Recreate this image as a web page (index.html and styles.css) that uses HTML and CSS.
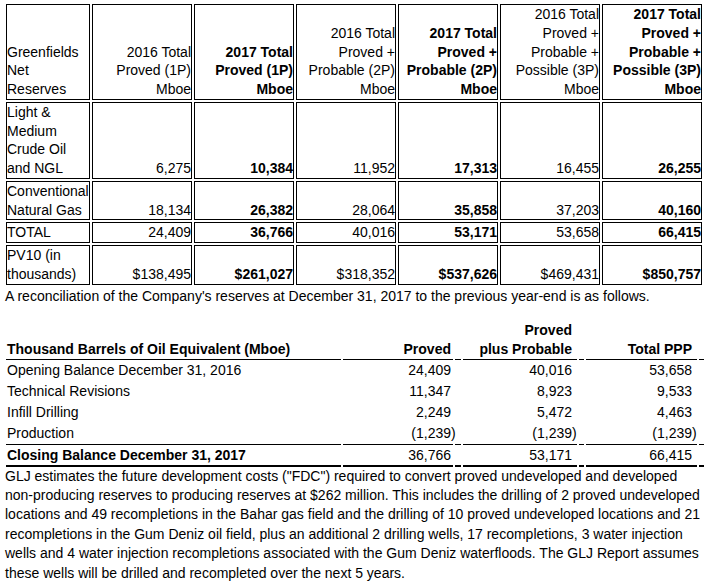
FILE: index.html
```html
<!DOCTYPE html>
<html>
<head>
<meta charset="utf-8">
<link rel="stylesheet" href="styles.css">
</head>
<body>
<table class="reserves">
  <tr>
    <td class="lbl w-lbl">Greenfields<br>Net<br>Reserves</td>
    <td class="w-num">2016 Total Proved (1P) Mboe</td>
    <td class="w-num b">2017 Total Proved (1P) Mboe</td>
    <td class="w-num">2016 Total Proved + Probable (2P) Mboe</td>
    <td class="w-num b">2017 Total Proved + Probable (2P) Mboe</td>
    <td class="w-num">2016 Total Proved + Probable + Possible (3P) Mboe</td>
    <td class="w-num b">2017 Total Proved + Probable + Possible (3P) Mboe</td>
  </tr>
  <tr>
    <td class="lbl">Light &amp;<br>Medium<br>Crude Oil<br>and NGL</td>
    <td>6,275</td>
    <td class="b">10,384</td>
    <td>11,952</td>
    <td class="b">17,313</td>
    <td>16,455</td>
    <td class="b">26,255</td>
  </tr>
  <tr>
    <td class="lbl">Conventional<br>Natural Gas</td>
    <td>18,134</td>
    <td class="b">26,382</td>
    <td>28,064</td>
    <td class="b">35,858</td>
    <td>37,203</td>
    <td class="b">40,160</td>
  </tr>
  <tr>
    <td class="lbl">TOTAL</td>
    <td>24,409</td>
    <td class="b">36,766</td>
    <td>40,016</td>
    <td class="b">53,171</td>
    <td>53,658</td>
    <td class="b">66,415</td>
  </tr>
  <tr>
    <td class="lbl">PV10 (in<br>thousands)</td>
    <td>$138,495</td>
    <td class="b">$261,027</td>
    <td>$318,352</td>
    <td class="b">$537,626</td>
    <td>$469,431</td>
    <td class="b">$850,757</td>
  </tr>
</table>
<p class="note">A reconciliation of the Company's reserves at December 31, 2017 to the previous year-end is as follows.</p>

<table class="recon">
  <tr class="head">
    <td class="lbl w-lbl">Thousand Barrels of Oil Equivalent (Mboe)</td>
    <td class="v1 w-v1">Proved</td>
    <td class="p w-p1"></td>
    <td class="v2 w-v2">Proved<br>plus Probable</td>
    <td class="p w-p2"></td>
    <td class="v3 w-v3">Total PPP</td>
    <td class="p w-p3"></td>
  </tr>
  <tr>
    <td class="lbl">Opening Balance December 31, 2016</td>
    <td class="v1">24,409</td><td class="p"></td>
    <td class="v2">40,016</td><td class="p"></td>
    <td class="v3">53,658</td><td class="p"></td>
  </tr>
  <tr>
    <td class="lbl">Technical Revisions</td>
    <td class="v1">11,347</td><td class="p"></td>
    <td class="v2">8,923</td><td class="p"></td>
    <td class="v3">9,533</td><td class="p"></td>
  </tr>
  <tr>
    <td class="lbl">Infill Drilling</td>
    <td class="v1">2,249</td><td class="p"></td>
    <td class="v2">5,472</td><td class="p"></td>
    <td class="v3">4,463</td><td class="p"></td>
  </tr>
  <tr class="sub">
    <td class="lbl">Production</td>
    <td class="v1">(1,239<span class="rp">)</span></td><td class="p"></td>
    <td class="v2">(1,239<span class="rp">)</span></td><td class="p"></td>
    <td class="v3">(1,239<span class="rp">)</span></td><td class="p"></td>
  </tr>
  <tr class="total">
    <td class="lbl">Closing Balance December 31, 2017</td>
    <td class="v1">36,766</td><td class="p"></td>
    <td class="v2">53,171</td><td class="p"></td>
    <td class="v3">66,415</td><td class="p"></td>
  </tr>
</table>

<p class="para">GLJ estimates the future development costs ("FDC") required to convert proved undeveloped and developed<br>non-producing reserves to producing reserves at $262 million. This includes the drilling of 2 proved undeveloped<br>locations and 49 recompletions in the Bahar gas field and the drilling of 10 proved undeveloped locations and 21<br>recompletions in the Gum Deniz oil field, plus an additional 2 drilling wells, 17 recompletions, 3 water injection<br>wells and 4 water injection recompletions associated with the Gum Deniz waterfloods. The GLJ Report assumes<br>these wells will be drilled and recompleted over the next 5 years.</p>
</body>
</html>
```

FILE: styles.css
```css
html, body {
  background: #fff;
}
body {
  margin: 0;
  padding: 2px 0 0 4px;
  font-family: "Liberation Sans", Arial, sans-serif;
  font-size: 14px;
  color: #000;
}
.b {
  font-weight: bold;
}

/* first table */
.reserves {
  border-collapse: separate;
  border-spacing: 2px;
}
.reserves td {
  box-sizing: border-box;
  border: 1px solid #000;
  padding: 0;
  line-height: 18.75px;
  vertical-align: bottom;
  text-align: right;
}
.reserves td.lbl {
  text-align: left;
}
.reserves .w-lbl {
  width: 84px;
}
.reserves .w-num {
  width: 100px;
}

.note {
  margin: 0;
  padding-left: 1px;
  line-height: 19px;
  white-space: nowrap;
}

/* second table */
.recon {
  margin-top: 15px;
  border-collapse: separate;
  border-spacing: 2px 0;
}
.recon td {
  box-sizing: border-box;
  padding: 1px 0;
  line-height: 19px;
  vertical-align: bottom;
  text-align: right;
  white-space: nowrap;
}
.recon td.lbl {
  text-align: left;
  padding-left: 1px;
}
.recon .head td {
  font-weight: bold;
  padding: 0;
  border-bottom: 1px solid #000;
}
.recon .head td.lbl {
  padding-left: 1px;
}
.recon .sub td {
  border-bottom: 1px solid #000;
}
.recon .total td {
  border-bottom: 2px solid #000;
  padding-bottom: 0;
}
.recon .total td.lbl {
  font-weight: bold;
}
.recon td.v1 {
  padding-right: 2px;
}
.recon td.v2,
.recon td.v3 {
  padding-right: 5px;
}
.recon .head td.v1 {
  padding-right: 2px;
}
.recon .head td.v2,
.recon .head td.v3 {
  padding-right: 5px;
}
.recon .w-lbl { width: 335px; }
.recon .w-v1 { width: 110px; }
.recon .w-p1 { width: 6px; }
.recon .w-v2 { width: 114px; }
.recon .w-p2 { width: 5px; }
.recon .w-v3 { width: 111px; }
.recon .w-p3 { width: 5px; }
.rp {
  margin-right: -4.7px;
}

.para {
  margin: 0;
  padding-left: 1px;
  line-height: 19.4px;
  white-space: nowrap;
}
```
